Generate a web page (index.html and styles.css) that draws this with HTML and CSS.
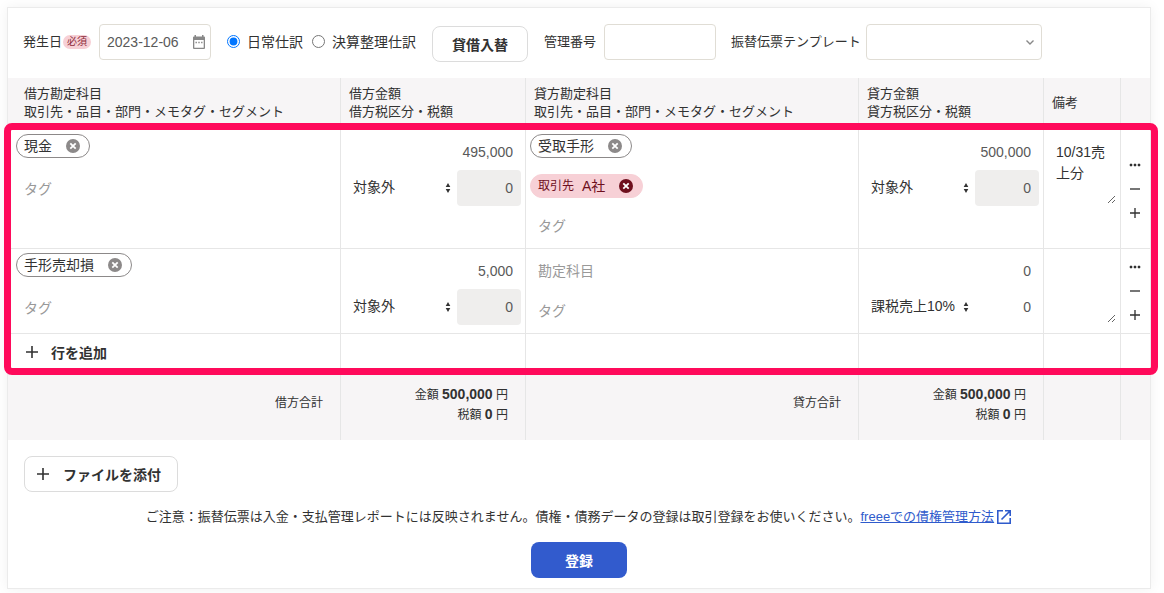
FILE: index.html
```html
<!DOCTYPE html>
<html lang="ja">
<head>
    <meta charset="UTF-8">
    <meta name="viewport" content="width=device-width, initial-scale=1.0">
    <title>振替伝票</title>
    <link rel="stylesheet" href="styles.css">
</head>
<body>
    <!-- Shared icons -->
    <svg class="icon-defs" aria-hidden="true">
        <symbol id="icon-close" viewBox="0 0 14 14">
            <circle cx="7" cy="7" r="7" fill="currentColor"/>
            <path d="M4.3 4.3l5.4 5.4M9.7 4.3l-5.4 5.4" stroke="#fff" stroke-width="1.8"/>
        </symbol>
        <symbol id="icon-plus" viewBox="0 0 12 12">
            <path d="M6 0v12M0 6h12" stroke="currentColor" stroke-width="1.6"/>
        </symbol>
        <symbol id="icon-minus" viewBox="0 0 12 12">
            <path d="M0 6h12" stroke="currentColor" stroke-width="1.6"/>
        </symbol>
        <symbol id="icon-more" viewBox="0 0 12 12">
            <path d="M1 5h2v2h-2zM5 5h2v2h-2zM9 5h2v2h-2z" fill="currentColor" stroke="currentColor" stroke-width="0.5"/>
        </symbol>
        <symbol id="icon-sort" viewBox="0 0 6 10">
            <path d="M3 0l2.3 4h-4.6zM3 10l2.3-4h-4.6z" fill="currentColor"/>
        </symbol>
    </svg>

    <form class="slip">
        <div class="toolbar">
            <div class="field">
                <label for="issueDate">発生日</label><span class="required">必須</span>
                <div class="date-box">
                    <input class="text-input" type="text" id="issueDate" value="2023-12-06">
                    <svg class="date-icon" viewBox="0 0 12 14" aria-hidden="true">
                        <path d="M1.5 0h1.5v1.5h6V0h1.5v1.5h.5a1 1 0 0 1 1 1V13a1 1 0 0 1-1 1H1a1 1 0 0 1-1-1V2.5a1 1 0 0 1 1-1h.5zM1.3 5v7.7h9.4V5z" fill="#888" fill-rule="evenodd"/>
                        <path d="M2.5 7.5h7" stroke="#888" stroke-width="1.4" stroke-dasharray="1.4 1.4"/>
                    </svg>
                </div>
            </div>
            <div class="radios">
                <input type="radio" name="kind" id="kindDaily" checked>
                <label for="kindDaily">日常仕訳</label>
                <input type="radio" name="kind" id="kindClosing">
                <label for="kindClosing">決算整理仕訳</label>
            </div>
            <button type="button" class="btn btn-swap">貸借入替</button>
            <div class="field field-number">
                <label for="slipNumber">管理番号</label>
                <input class="text-input" type="text" id="slipNumber">
            </div>
            <div class="field field-template">
                <label for="template">振替伝票テンプレート</label>
                <div class="template-box">
                    <select id="template"><option></option></select>
                    <svg class="template-arrow" viewBox="0 0 8 5" aria-hidden="true">
                        <path d="M0.5 0.5L4 4l3.5-3.5" fill="none" stroke="#888" stroke-width="1.4"/>
                    </svg>
                </div>
            </div>
        </div>

        <div class="journal-wrap">
            <table class="journal">
                <colgroup>
                    <col>
                    <col class="col-amount">
                    <col>
                    <col class="col-amount">
                    <col class="col-memo">
                    <col class="col-actions">
                </colgroup>
                <thead>
                    <tr>
                        <th class="first">借方勘定科目<br>取引先・品目・部門・メモタグ・セグメント</th>
                        <th>借方金額<br>借方税区分・税額</th>
                        <th>貸方勘定科目<br>取引先・品目・部門・メモタグ・セグメント</th>
                        <th>貸方金額<br>貸方税区分・税額</th>
                        <th>備考</th>
                        <th></th>
                    </tr>
                </thead>
                <tbody>
                    <tr>
                        <td class="first">
                            <div class="account debit">
                                <div class="slot"><span class="chip">現金<button type="button" aria-label="現金を削除"><svg><use href="#icon-close"/></svg></button></span></div>
                                <input class="cell-input" type="text" placeholder="タグ" aria-label="借方タグ">
                            </div>
                        </td>
                        <td>
                            <div class="amount">
                                <input class="cell-input number wide" type="text" value="495,000" aria-label="借方金額">
                                <div class="tax-type">
                                    <select aria-label="借方税区分"><option>対象外</option></select>
                                    <svg><use href="#icon-sort"/></svg>
                                </div>
                                <input class="cell-input number" type="text" value="0" aria-label="借方税額" disabled>
                            </div>
                        </td>
                        <td>
                            <div class="account">
                                <div class="slot"><span class="chip">受取手形<button type="button" aria-label="受取手形を削除"><svg><use href="#icon-close"/></svg></button></span></div>
                                <div class="tags"><span class="chip chip-tag"><small>取引先</small>A社<button type="button" aria-label="A社を削除"><svg><use href="#icon-close"/></svg></button></span></div>
                                <input class="cell-input" type="text" placeholder="タグ" aria-label="貸方タグ">
                            </div>
                        </td>
                        <td>
                            <div class="amount">
                                <input class="cell-input number wide" type="text" value="500,000" aria-label="貸方金額">
                                <div class="tax-type">
                                    <select aria-label="貸方税区分"><option>対象外</option></select>
                                    <svg><use href="#icon-sort"/></svg>
                                </div>
                                <input class="cell-input number" type="text" value="0" aria-label="貸方税額" disabled>
                            </div>
                        </td>
                        <td><textarea aria-label="備考">10/31売上分</textarea></td>
                        <td class="actions">
                            <button type="button" aria-label="メニュー"><svg><use href="#icon-more"/></svg></button>
                            <button type="button" aria-label="行を削除"><svg><use href="#icon-minus"/></svg></button>
                            <button type="button" aria-label="行を挿入"><svg><use href="#icon-plus"/></svg></button>
                        </td>
                    </tr>
                    <tr>
                        <td class="first">
                            <div class="account debit">
                                <div class="slot"><span class="chip">手形売却損<button type="button" aria-label="手形売却損を削除"><svg><use href="#icon-close"/></svg></button></span></div>
                                <input class="cell-input" type="text" placeholder="タグ" aria-label="借方タグ">
                            </div>
                        </td>
                        <td>
                            <div class="amount">
                                <input class="cell-input number wide" type="text" value="5,000" aria-label="借方金額">
                                <div class="tax-type">
                                    <select aria-label="借方税区分"><option>対象外</option></select>
                                    <svg><use href="#icon-sort"/></svg>
                                </div>
                                <input class="cell-input number" type="text" value="0" aria-label="借方税額" disabled>
                            </div>
                        </td>
                        <td>
                            <div class="account">
                                <input class="cell-input" type="text" placeholder="勘定科目" aria-label="貸方勘定科目">
                                <input class="cell-input" type="text" placeholder="タグ" aria-label="貸方タグ">
                            </div>
                        </td>
                        <td>
                            <div class="amount">
                                <input class="cell-input number wide" type="text" value="0" aria-label="貸方金額">
                                <div class="tax-type">
                                    <select aria-label="貸方税区分"><option>課税売上10%</option></select>
                                    <svg><use href="#icon-sort"/></svg>
                                </div>
                                <input class="cell-input number" type="text" value="0" aria-label="貸方税額">
                            </div>
                        </td>
                        <td><textarea aria-label="備考"></textarea></td>
                        <td class="actions">
                            <button type="button" aria-label="メニュー"><svg><use href="#icon-more"/></svg></button>
                            <button type="button" aria-label="行を削除"><svg><use href="#icon-minus"/></svg></button>
                            <button type="button" aria-label="行を挿入"><svg><use href="#icon-plus"/></svg></button>
                        </td>
                    </tr>
                    <tr class="add-row">
                        <td class="first"><button type="button" class="btn-add"><svg><use href="#icon-plus"/></svg>行を追加</button></td>
                        <td></td>
                        <td></td>
                        <td></td>
                        <td></td>
                        <td></td>
                    </tr>
                </tbody>
                <tfoot>
                    <tr>
                        <td class="total-label">借方合計</td>
                        <td>金額 <b>500,000</b> 円<br>税額 <b>0</b> 円</td>
                        <td class="total-label">貸方合計</td>
                        <td>金額 <b>500,000</b> 円<br>税額 <b>0</b> 円</td>
                        <td></td>
                        <td></td>
                    </tr>
                </tfoot>
            </table>
        </div>

        <div class="bottom">
            <button type="button" class="btn btn-attach"><svg><use href="#icon-plus"/></svg>ファイルを添付</button>
            <p class="notice">ご注意：振替伝票は入金・支払管理レポートには反映されません。債権・債務データの登録は取引登録をお使いください。<a href="#">freeeでの債権管理方法</a><svg class="external" viewBox="0 0 16 16" aria-hidden="true"><path d="M7 1.8H1.8v12.4h12.4V9M5.5 10.5l8.5-8.5M9 1.8h5.2V7" fill="none" stroke="#2f5bcc" stroke-width="1.6"/></svg></p>
            <button type="submit" class="btn btn-submit">登録</button>
        </div>
    </form>
</body>
</html>
```
FILE: styles.css
```css
* {
    box-sizing: border-box;
}

body {
    margin: 0;
    padding: 7px 13px 4px 7px;
    background-color: #fff;
    color: #323232;
    font-family: "Liberation Sans", "Noto Sans CJK JP", sans-serif;
    font-size: 13px;
    line-height: 18px;
}

button,
input,
select,
textarea {
    color: inherit;
    font-family: inherit;
    font-size: 14px;
}

button {
    padding: 0;
    border: 0;
    background: none;
    cursor: pointer;
}

svg {
    display: block;
    width: 12px;
    height: 12px;
    flex: none;
}

.icon-defs {
    position: absolute;
    width: 0;
    height: 0;
}

.slip {
    border: 1px solid #ebebeb;
    background-color: #fff;
    box-shadow: 0 0 12px rgba(0, 0, 0, 0.06);
}

/* toolbar */
.toolbar {
    display: flex;
    align-items: center;
    padding: 14px 15px 16px;
    white-space: nowrap;
}

.field {
    display: flex;
    align-items: center;
}

.required {
    margin: 0 8px 0 1px;
    padding: 0 4px;
    border-radius: 7px;
    background-color: #f7d0d6;
    color: #8c2b3a;
    font-size: 10px;
    line-height: 14px;
}

.text-input,
.template-box select {
    width: 112px;
    height: 36px;
    padding: 0 7px;
    border: 1px solid #e0ddd5;
    border-radius: 4px;
    background-color: #fff;
    color: #595959;
}

.date-box,
.template-box,
.tax-type {
    position: relative;
}

.date-icon {
    position: absolute;
    top: 11px;
    right: 6px;
    height: 14px;
}

.radios {
    display: flex;
    align-items: center;
    margin-left: 16px;
    font-size: 14px;
}

.radios input {
    width: 13px;
    height: 13px;
    margin: 0 7px 2px 0;
}

.radios label + input {
    margin-left: 9px;
}

.btn {
    height: 36px;
    border: 1px solid #dcdcdc;
    border-radius: 8px;
    background-color: #fff;
    font-weight: bold;
}

.btn-swap {
    width: 96px;
    margin: 4px 16px 0;
}

.field-number {
    gap: 8px;
}

.field-template {
    gap: 5px;
    margin-left: 15px;
}

.template-box select {
    width: 176px;
    appearance: none;
}

.template-arrow {
    position: absolute;
    top: 16px;
    right: 8px;
    width: 8px;
    height: 5px;
    pointer-events: none;
}

/* journal table */
.journal-wrap {
    position: relative;
}

/* highlight frame around the input rows */
.journal-wrap::after {
    content: "";
    position: absolute;
    top: 45px;
    right: -8px;
    bottom: 65px;
    left: -4px;
    border: 7px solid #ff0a5b;
    border-radius: 8px;
    pointer-events: none;
}

.journal {
    width: 100%;
    border-spacing: 0;
    table-layout: fixed;
}

.col-amount {
    width: 185px;
}

.col-memo {
    width: 77px;
}

.col-actions {
    width: 29px;
}

.journal th,
.journal td {
    border-right: 1px solid #e6e6e6;
}

.journal th:last-child,
.journal td:last-child {
    border-right: 0;
}

.journal th {
    height: 52px;
    padding: 0 0 2px 8px;
    background-color: #f7f5f6;
    font-weight: normal;
    text-align: left;
    white-space: nowrap;
}

.journal th.first {
    padding-left: 16px;
}

.journal tbody td {
    padding: 4px;
    border-bottom: 1px solid #e6e6e6;
    vertical-align: top;
}

.journal tbody td.first {
    padding-left: 8px;
}

.account {
    display: flex;
    flex-direction: column;
    gap: 4px;
}

.debit {
    gap: 1px;
}

.slot {
    height: 36px;
}

.tags {
    padding-bottom: 6px;
}

.slot,
.tags {
    display: flex;
    align-items: flex-start;
}

.chip {
    display: flex;
    align-items: center;
    height: 24px;
    padding: 0 9px 0 7px;
    border: 1px solid #8c8989;
    border-radius: 12px;
    font-size: 14px;
}

.chip button {
    margin-left: 14px;
    color: #8c8989;
}

.chip svg {
    width: 14px;
    height: 14px;
}

.chip small {
    margin-right: 8px;
    font-size: 12px;
}

.chip-tag {
    border-color: #f7d0d6;
    background-color: #f7d0d6;
    color: #6e0f1d;
}

.chip-tag button {
    color: #6e0f1d;
}

.cell-input {
    width: 100%;
    height: 36px;
    padding: 0 8px;
    border: 0;
    border-radius: 4px;
    background: none;
}

.cell-input::placeholder {
    color: #999;
    opacity: 1;
}

.number {
    color: #595959;
    text-align: right;
}

.number:disabled {
    background-color: #efeeed;
}

.amount {
    display: grid;
    grid-template-columns: 1fr 64px;
}

.wide {
    grid-column: 1 / -1;
}

.tax-type select {
    width: 100%;
    height: 34px;
    padding: 0 8px;
    border: 0;
    background: none;
    appearance: none;
}

.tax-type svg {
    position: absolute;
    top: 13px;
    right: 6px;
    width: 6px;
    height: 10px;
    pointer-events: none;
}

textarea {
    display: block;
    width: 68px;
    height: 70px;
    padding: 8px;
    border: 0;
    background: none;
    line-height: 21px;
    overflow: hidden;
    resize: both;
}

.journal tbody td.actions {
    padding: 0 1px 0 0;
    vertical-align: middle;
}

.actions button {
    display: flex;
    align-items: center;
    justify-content: center;
    width: 100%;
    height: 24px;
}

.actions svg {
    width: 10px;
    height: 10px;
}

.actions button:first-child svg {
    width: 12px;
    height: 12px;
}

.journal .add-row td {
    height: 37px;
}

.btn-add {
    display: flex;
    align-items: center;
    gap: 13px;
    height: 28px;
    padding-left: 10px;
    font-weight: bold;
}

.journal tfoot td {
    height: 69px;
    padding: 0 17px 1px 0;
    background-color: #f7f5f6;
    font-size: 12px;
    line-height: 19px;
    text-align: right;
}

.journal tfoot td.total-label {
    padding-bottom: 4px;
}

.journal b {
    font-size: 14px;
}

/* bottom */
.bottom {
    display: flex;
    flex-direction: column;
    align-items: center;
    padding: 16px 16px 10px;
}

.btn-attach {
    display: flex;
    align-items: center;
    align-self: flex-start;
    gap: 14px;
    padding: 0 16px 0 12px;
}

.notice {
    display: flex;
    align-items: center;
    margin: 16px 0;
}

.notice a {
    color: #2f5bcc;
}

.external {
    width: 16px;
    height: 16px;
    margin-left: 2px;
}

.btn-submit {
    width: 96px;
    border: 0;
    background-color: #325bcd;
    color: #fff;
}
```
